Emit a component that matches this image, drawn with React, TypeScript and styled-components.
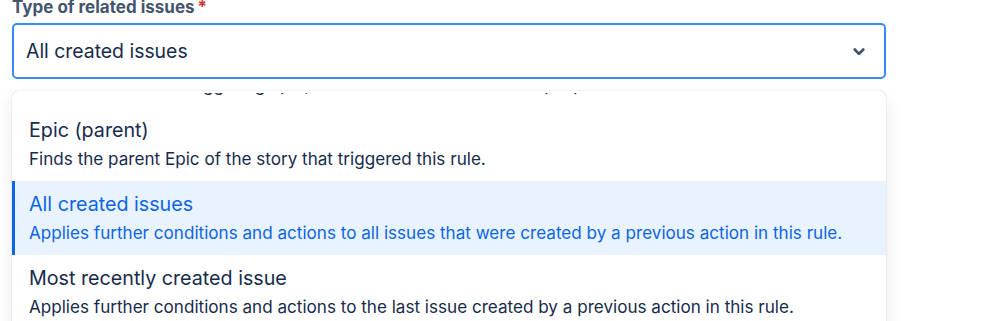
import { useLayoutEffect, useRef } from "react";
import styled, { createGlobalStyle } from "styled-components";

const GlobalStyle = createGlobalStyle`
	html, body {
		margin: 0;
		padding: 0;
		background: #ffffff;
		font-family: Inter, "Noto Sans", "Liberation Sans", sans-serif;
		overflow: hidden;
	}
`;

const Page = styled.div`
	padding: 0 12px;
	width: 874px;
`;

const Label = styled.label`
	display: flex;
	gap: 3px;
	font-size: 17px;
	font-weight: 700;
	line-height: 14px;
	height: 14px;
	color: #44546f;
	align-items: flex-end;
	margin-bottom: 9px;
`;

const Required = styled.span`
	color: #c9372c;
`;

const Select = styled.div`
	box-sizing: border-box;
	height: 56px;
	border: 2px solid #388bff;
	border-radius: 5px;
	display: flex;
	align-items: center;
	justify-content: space-between;
	padding: 0 8px 0 12px;
	font-size: 19.4px;
	color: #172b4d;
`;

const Menu = styled.div`
	margin-top: 12px;
	padding-top: 2px;
	border-radius: 6px;
	background: #ffffff;
	box-shadow: 0 8px 16px rgba(9, 30, 66, 0.1), 0 0 1px rgba(9, 30, 66, 0.35);
	overflow: hidden;
`;

const List = styled.div`
	height: 260px;
	overflow-y: auto;
	scrollbar-width: none;
	&::-webkit-scrollbar {
		display: none;
	}
`;

const Option = styled.div<{ $selected?: boolean }>`
	box-sizing: border-box;
	padding: 9px 14px 11px;
	border-left: 3px solid ${(p) => (p.$selected ? "#0c66e4" : "transparent")};
	background: ${(p) => (p.$selected ? "#e9f2ff" : "transparent")};
	color: ${(p) => (p.$selected ? "#0c66e4" : "#172b4d")};
`;

const Title = styled.div`
	font-size: 19.7px;
	line-height: 28px;
`;

const Desc = styled.div`
	margin-top: 4px;
	font-size: 17.1px;
	line-height: 22px;
`;

const options = [
	{
		title: "Stories (or other issues in Epic)",
		desc: "Finds stories in the triggering epic, or other child issues of the epic parent.",
	},
	{ title: "Epic (parent)", desc: "Finds the parent Epic of the story that triggered this rule." },
	{
		title: "All created issues",
		desc: "Applies further conditions and actions to all issues that were created by a previous action in this rule.",
		selected: true,
	},
	{
		title: "Most recently created issue",
		desc: "Applies further conditions and actions to the last issue created by a previous action in this rule.",
	},
	{ title: "Linked issues", desc: "Finds issues linked to the issue that triggered this rule." },
];

function Chevron() {
	return (
		<svg width="34" height="34" viewBox="0 0 24 24">
			<path
				d="M8.292 10.293a1.009 1.009 0 0 0 0 1.419l2.939 2.965c.218.215.5.322.779.322s.556-.107.769-.322l2.93-2.955a1.01 1.01 0 0 0 0-1.419.987.987 0 0 0-1.406 0l-2.298 2.317-2.307-2.327a.99.99 0 0 0-1.406 0z"
				fill="#44546f"
			/>
		</svg>
	);
}

export default function App() {
	const listRef = useRef<HTMLDivElement>(null);
	useLayoutEffect(() => {
		if (listRef.current) listRef.current.scrollTop = 60;
	}, []);
	return (
		<Page>
			<GlobalStyle />
			<Label>
				Type of related issues<Required>*</Required>
			</Label>
			<Select>
				All created issues
				<Chevron />
			</Select>
			<Menu>
				<List ref={listRef}>
					{options.map((o) => (
						<Option key={o.title} $selected={o.selected}>
							<Title>{o.title}</Title>
							<Desc>{o.desc}</Desc>
						</Option>
					))}
				</List>
			</Menu>
		</Page>
	);
}
